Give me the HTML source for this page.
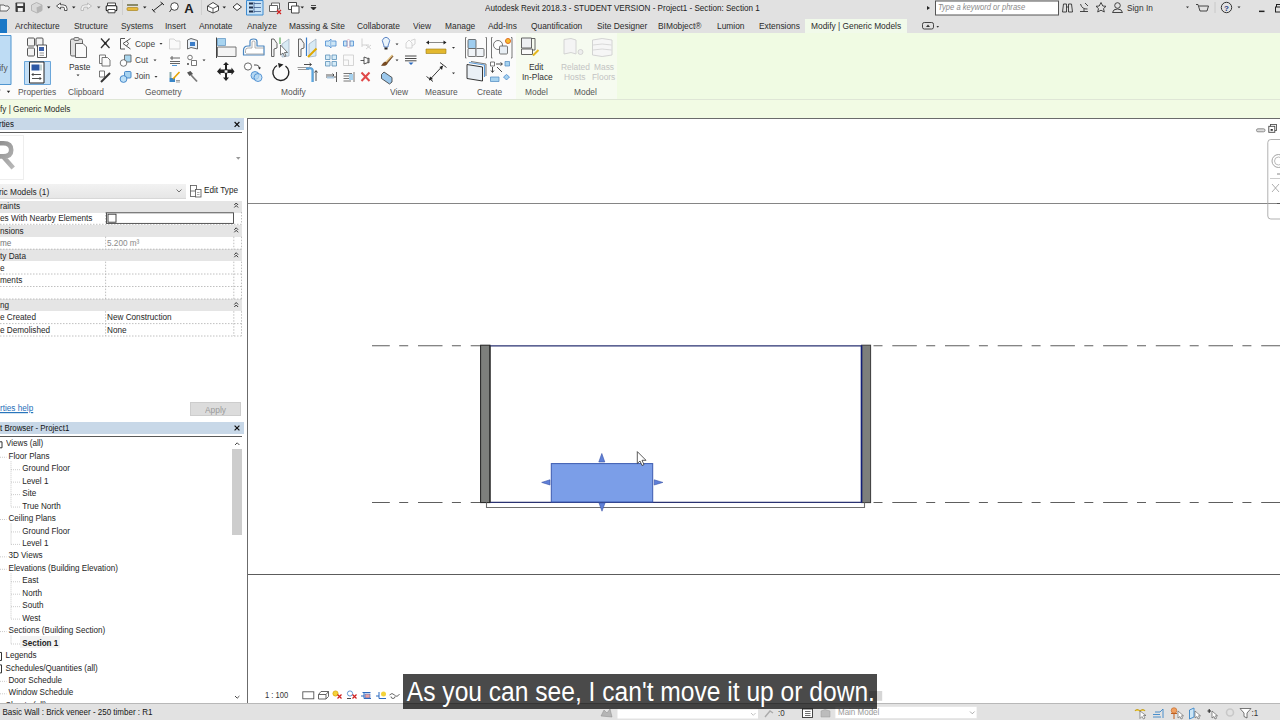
<!DOCTYPE html>
<html><head><meta charset="utf-8">
<style>
*{margin:0;padding:0;box-sizing:border-box}
html,body{width:1280px;height:720px;overflow:hidden;background:#fff;font-family:"Liberation Sans",sans-serif;color:#1e1e1e}
.a{position:absolute}
.t{position:absolute;white-space:nowrap;font-size:8px;line-height:10px;transform:scaleY(1.15);transform-origin:0 7.7px}
svg{position:absolute;overflow:visible}
#title{left:0;top:0;width:1280px;height:33px;background:#e1e1e1}
#ribbon{left:0;top:33px;width:1280px;height:66px;background:#fbfbfb}
#opts{left:0;top:99px;width:1280px;height:19px;background:#f2fbe4;border-top:1px solid #dfe6d6}
#props{left:0;top:118px;width:247px;height:586px;background:#fff}
#status{left:0;top:704px;width:1280px;height:16px;background:#e2e2e2}
#view{left:247px;top:118px;width:1033px;height:586px;background:#fff;border-left:1px solid #6b6b6b;border-top:1px solid #6b6b6b}
.hdr{position:absolute;left:0;width:244px;height:12px;background:#c8d8e8}
.grp{position:absolute;left:0;width:242px;height:12px;background:#e5e5e5}
.tab{position:absolute;top:22px;font-size:8.4px;line-height:8px;white-space:nowrap;color:#2b2b2b;transform:scaleY(1.15);transform-origin:0 6.8px}
.pl{position:absolute;top:88px;font-size:8.4px;line-height:8px;white-space:nowrap;color:#555;transform:scaleY(1.15);transform-origin:0 6.8px}
.pr{font-size:8.2px;color:#1e1e1e}
.tr{position:absolute;margin-top:-0.6px;font-size:8.1px;line-height:10px;white-space:nowrap;color:#1e1e1e;transform:scaleY(1.15);transform-origin:0 7.7px}
#cap{left:402.5px;top:673.8px;width:474.7px;height:35.2px;background:rgba(0,0,0,0.71)}
#cap span{position:absolute;left:4.3px;top:4px;font-size:24.6px;line-height:30px;color:#fff;white-space:nowrap;transform:scaleY(1.09);transform-origin:0 23px}
</style></head><body>
<!-- title + tabs -->
<div id="title" class="a"></div>
<div class="t" style="left:485px;top:3.8px;font-size:8.1px;color:#222">Autodesk Revit 2018.3 - STUDENT VERSION - Project1 - Section: Section 1</div>
<div class="a" style="left:0;top:19px;width:7px;height:14px;background:#1b78c6"></div>
<div class="a" style="left:805px;top:19px;width:102px;height:14px;background:#f1faea"></div>
<div class="tab" style="left:15px">Architecture</div>
<div class="tab" style="left:74px">Structure</div>
<div class="tab" style="left:121px">Systems</div>
<div class="tab" style="left:165px">Insert</div>
<div class="tab" style="left:199px">Annotate</div>
<div class="tab" style="left:247px">Analyze</div>
<div class="tab" style="left:289px">Massing &amp; Site</div>
<div class="tab" style="left:357px">Collaborate</div>
<div class="tab" style="left:413px">View</div>
<div class="tab" style="left:445px">Manage</div>
<div class="tab" style="left:488px">Add-Ins</div>
<div class="tab" style="left:531px">Quantification</div>
<div class="tab" style="left:597px">Site Designer</div>
<div class="tab" style="left:658px">BIMobject®</div>
<div class="tab" style="left:717px">Lumion</div>
<div class="tab" style="left:759px">Extensions</div>
<div class="tab" style="left:811px">Modify | Generic Models</div>

<!-- ribbon -->
<div id="ribbon" class="a"></div>
<div class="a" style="left:516px;top:33px;width:101px;height:66px;background:#f6fbf0"></div>
<div class="a" style="left:617px;top:33px;width:663px;height:66px;background:#f0fbe3"></div>
<svg width="1280" height="100" style="left:0;top:0" viewBox="0 0 1280 100">
 <!-- QAT -->
 <g stroke-linejoin="round">
  <path d="M0 5 H4 L5 6 H8 L9.5 8 L7 11 H0 Z" fill="#f4f4f4" stroke="#555" stroke-width="0.9"/>
  <rect x="15.5" y="2.5" width="9.5" height="9.5" rx="0.8" fill="#3a3a3a"/>
  <rect x="17.2" y="3.4" width="6" height="2.6" fill="#f2f2f2"/>
  <rect x="17.8" y="8" width="5" height="3.6" fill="#f2f2f2"/>
  <path d="M31.5 5 L36.5 2.5 L42 5 V10.5 L37 13 L31.5 10.5 Z" fill="#d8d8d8" stroke="#aaa" stroke-width="0.8"/>
  <path d="M36.5 7.5 L42 5 V10.5 L37 13 Z" fill="#b5b5b5"/>
  <path d="M47 6.5 H50.5 L48.75 8.5 Z" fill="#222"/>
  <path d="M56.5 6 L60.5 3 V4.8 H63 Q67 4.8 67 8.5 V10.5 H64.5 V8.5 Q64.5 7.2 63 7.2 H60.5 V9 Z" fill="#fff" stroke="#444" stroke-width="0.9"/>
  <path d="M72 6.5 H75.5 L73.75 8.5 Z" fill="#222"/>
  <path d="M91.5 6 L87.5 3 V4.8 H85 Q81 4.8 81 8.5 V10.5 H83.5 V8.5 Q83.5 7.2 85 7.2 H87.5 V9 Z" fill="#f0f0f0" stroke="#b8b8b8" stroke-width="0.9"/>
  <path d="M97 6.5 H100.5 L98.75 8.5 Z" fill="#555"/>
  <rect x="107.5" y="3" width="8" height="3" fill="#fff" stroke="#333" stroke-width="0.9"/>
  <rect x="106.2" y="5.8" width="10.6" height="5" rx="1" fill="#fff" stroke="#222" stroke-width="1.1"/>
  <rect x="108" y="9.5" width="7" height="3.3" fill="#fff" stroke="#333" stroke-width="0.9"/>
  <line x1="122.5" y1="0" x2="122.5" y2="15" stroke="#cfcfcf" stroke-width="1"/>
  <rect x="127" y="4" width="11" height="2" fill="#8a8a6a"/>
  <rect x="127" y="7.5" width="11" height="3" rx="1" fill="#e8b93a" stroke="#a07a10" stroke-width="0.6"/>
  <path d="M143 6.5 H146.5 L144.75 8.5 Z" fill="#222"/>
  <path d="M153 11 L163 3 M152 9 L155 12.5 M160.5 2 L164 5" stroke="#222" stroke-width="1"/>
  <circle cx="174.5" cy="6.5" r="3.8" fill="#fff" stroke="#333" stroke-width="0.9"/>
  <path d="M171.5 9 L169.5 12" stroke="#333" stroke-width="0.9"/>
  <text x="189" y="13" font-size="13" font-weight="bold" fill="#222" font-family="Liberation Sans" text-anchor="middle">A</text>
  <line x1="201.5" y1="0" x2="201.5" y2="15" stroke="#cfcfcf" stroke-width="1"/>
  <path d="M207.5 6 L213 2.5 L218.5 6 V10.5 L213 13 L207.5 10.5 Z" fill="#fff" stroke="#333" stroke-width="0.9"/>
  <path d="M207.5 6 L213 8.5 L218.5 6 M213 8.5 V13" fill="none" stroke="#333" stroke-width="0.8"/>
  <path d="M222.5 6.5 H226 L224.25 8.5 Z" fill="#222"/>
  <path d="M233 7 L237 3.5 L241.5 7 L237 10.5 Z" fill="#fff" stroke="#333" stroke-width="1"/>
  <rect x="246.5" y="0.5" width="16.5" height="14.5" fill="#c6e1f6" stroke="#3d8bd0" stroke-width="1"/>
  <g fill="#1e2e4a"><rect x="249" y="2.5" width="4" height="2"/><rect x="249" y="6.5" width="4" height="2"/><rect x="249" y="10.5" width="4" height="2"/></g>
  <g stroke="#2a4a80" stroke-width="0.7"><path d="M254 3.5 H261 M254 7.5 H261 M254 11.5 H261 M254 2 V13"/></g>
  <rect x="271.5" y="3" width="8" height="6" fill="#fff" stroke="#555" stroke-width="0.9"/>
  <rect x="269.5" y="5.5" width="8" height="6" fill="#fff" stroke="#555" stroke-width="0.9"/>
  <path d="M277 10 L281 14 M281 10 L277 14" stroke="#d02020" stroke-width="1.2"/>
  <rect x="288.5" y="2.5" width="8" height="7" fill="#fff" stroke="#333" stroke-width="0.9"/>
  <rect x="291.5" y="6" width="7.5" height="7" fill="#fff" stroke="#333" stroke-width="0.9"/>
  <path d="M300.5 6.5 H304 L302.25 8.5 Z" fill="#222"/>
  <path d="M311 5.5 H316 M311 7.5 H316 L313.5 10 Z" fill="#222" stroke="#222" stroke-width="0.8"/>
 </g>
 <!-- title right side -->
 <path d="M927 6 L930 8 L927 10 Z" fill="#222"/>
 <rect x="935.5" y="1" width="123" height="14" fill="#fff" stroke="#555" stroke-width="1"/>
 <text x="938" y="10.5" font-size="7.6" font-style="italic" fill="#8a8a8a" font-family="Liberation Sans" transform="matrix(1 0 0 1.15 0 -1.575)">Type a keyword or phrase</text>
 <g fill="none" stroke="#333" stroke-width="0.9">
  <path d="M1063.5 4 H1066.5 V12 H1062.5 Z M1068.5 4 H1071.5 L1072.5 12 H1068.5 Z M1066.5 7 H1068.5"/>
  <path d="M1080 11.5 H1088 M1084 11.5 V9 M1080.5 4 Q1082 9.5 1087.5 9 M1085 3 L1088 6"/>
  <path d="M1101 2.5 L1102.8 6 L1106 6.3 L1103.5 8.6 L1104.3 12 L1101 10.2 L1097.7 12 L1098.5 8.6 L1096 6.3 L1099.2 6 Z"/>
  <circle cx="1117.5" cy="5.5" r="2.8"/>
  <path d="M1112.5 12.5 Q1113 9 1117.5 9 Q1122 9 1122.5 12.5 Z"/>
  <path d="M1196 4.5 H1198 L1200 11 H1207 L1208.5 6 H1199"/>
  <circle cx="1226.5" cy="7.5" r="5.2" stroke-width="1"/>
 </g>
 <text x="1127" y="11" font-size="8.3" fill="#333" font-family="Liberation Sans" transform="matrix(1 0 0 1.15 0 -1.650)">Sign In</text>
 <path d="M1186 6.5 H1189 L1187.5 8.3 Z" fill="#333"/>
 <line x1="1215" y1="2" x2="1215" y2="13" stroke="#c8c8c8" stroke-width="1"/>
 <text x="1226.5" y="10.5" font-size="8" font-weight="bold" fill="#1b3a80" font-family="Liberation Sans" text-anchor="middle">?</text>
 <path d="M1237.5 6.5 H1240.5 L1239 8.3 Z" fill="#333"/>
 <rect x="1259" y="10.6" width="5.5" height="1.5" fill="#222"/>
 <rect x="1276.5" y="4.5" width="6" height="5" fill="none" stroke="#222" stroke-width="1"/>
 <rect x="1275.5" y="7" width="6" height="5" fill="#e1e1e1" stroke="#222" stroke-width="1"/>
 <!-- tabs right icon -->
 <rect x="922.5" y="22.5" width="11" height="6.5" rx="1.8" fill="none" stroke="#333" stroke-width="0.9"/>
 <path d="M926 27 L928 24.5 L930 27 Z" fill="#333"/>
 <path d="M936.5 26 H939 L937.75 27.7 Z" fill="#333"/>
</svg>
<svg width="1280" height="100" style="left:0;top:0" viewBox="0 0 1280 100">
 <g stroke-linejoin="round">
 <!-- Modify button -->
 <rect x="-2" y="35.5" width="13" height="49" fill="#bedcf4" stroke="#4f95d0" stroke-width="1"/>
 <text x="-0.8" y="70.6" font-size="8.4" fill="#555" font-family="Liberation Sans" transform="matrix(1 0 0 1.15 0 -10.590)">ify</text>
 <path d="M6.8 90.7 H10.2 L8.5 93 Z" fill="#222"/>
 <path d="M-1 88 V93 M0.5 90 H-2" stroke="#666" stroke-width="0.9"/>
 <!-- Properties -->
 <g fill="#f3f3f3" stroke="#444" stroke-width="0.9">
  <rect x="27.5" y="38" width="7" height="8" rx="1"/><rect x="36" y="38" width="7" height="8" rx="1"/>
  <rect x="27.5" y="48" width="7" height="8" rx="1"/>
  <rect x="37.5" y="45" width="9" height="12.5" fill="#fff"/>
 </g>
 <rect x="39" y="47" width="5" height="4" fill="#3b5fa8"/>
 <path d="M39.5 53 H44 M39.5 55.3 H44" stroke="#666" stroke-width="0.7"/>
 <rect x="24.5" y="61.5" width="26" height="23" fill="#c4dff6" stroke="#6aa6da" stroke-width="1"/>
 <rect x="29.5" y="62" width="14.5" height="21" fill="#fff" stroke="#222" stroke-width="1"/>
 <rect x="31.5" y="64.5" width="8" height="6" fill="#2d58a4"/>
 <path d="M41 64.5 V70.5" stroke="#8aa" stroke-width="1"/>
 <path d="M32 74.5 H41 M33.5 73 L32 74.5 L33.5 76 M32 78.5 H41 M39.5 77 L41 78.5 L39.5 80" fill="none" stroke="#222" stroke-width="0.8"/>
 <!-- Clipboard -->
 <rect x="70.5" y="39" width="12" height="17" rx="1.5" fill="#e0e0e0" stroke="#555" stroke-width="0.9"/>
 <rect x="74" y="37.5" width="5" height="3" rx="1" fill="#ddd" stroke="#555" stroke-width="0.8"/>
 <path d="M75.5 43.5 H83 L86.5 47 V57.5 H75.5 Z" fill="#fafafa" stroke="#555" stroke-width="0.9"/>
 <text x="69" y="70.5" font-size="8.4" fill="#333" font-family="Liberation Sans" transform="matrix(1 0 0 1.15 0 -10.575)">Paste</text>
 <path d="M76.5 74.5 H79.5 L78 76.3 Z" fill="#333"/>
 <path d="M101 38.5 L109.5 48 M109.5 38.5 L101 48" stroke="#333" stroke-width="1.3"/>
 <circle cx="105.3" cy="43.3" r="1.2" fill="#222"/>
 <rect x="99.5" y="55" width="6" height="8.5" fill="#fff" stroke="#555" stroke-width="0.8"/>
 <path d="M102 57.5 H107.5 L110 60 V66 H102 Z" fill="#fafafa" stroke="#555" stroke-width="0.8"/>
 <rect x="99.5" y="71" width="5" height="6" fill="#fff" stroke="#555" stroke-width="0.8"/>
 <path d="M101 82 L110 73" stroke="#333" stroke-width="2"/>
 <!-- Geometry -->
 <path d="M120.5 38.5 V49 M120.5 38.5 H125 M120.5 49 H125 M123 43.5 L130.5 38.5 M123 43.5 L130.5 49 M126.5 41 L128.5 43.5 L126.5 46" fill="none" stroke="#555" stroke-width="1"/>
 <text x="135" y="46.8" font-size="8.4" fill="#444" font-family="Liberation Sans" transform="matrix(1 0 0 1.15 0 -7.020)">Cope</text>
 <path d="M159.5 43 H162.5 L161 44.8 Z" fill="#333"/>
 <rect x="124.5" y="55" width="6.5" height="7" fill="#a9d6ee" stroke="#555" stroke-width="0.8"/>
 <circle cx="123.5" cy="63" r="3.3" fill="#fff" stroke="#555" stroke-width="0.8"/>
 <text x="135" y="63" font-size="8.4" fill="#444" font-family="Liberation Sans" transform="matrix(1 0 0 1.15 0 -9.450)">Cut</text>
 <path d="M153.5 59.5 H156.5 L155 61.3 Z" fill="#333"/>
 <rect x="124.5" y="71.5" width="6.5" height="6.5" rx="1" fill="#a7d3f0" stroke="#3b7fc4" stroke-width="0.9"/>
 <circle cx="123.5" cy="79" r="3.4" fill="#bde0f7" stroke="#3b7fc4" stroke-width="0.9"/>
 <text x="134.5" y="79.3" font-size="8.4" fill="#444" font-family="Liberation Sans" transform="matrix(1 0 0 1.15 0 -11.895)">Join</text>
 <path d="M154.5 76 H157.5 L156 77.8 Z" fill="#333"/>
 <path d="M169.5 39 H174 L176 41 H180 V49 H169.5 Z" fill="#fafafa" stroke="#d0d0d0" stroke-width="0.9"/>
 <path d="M187.5 40 L191 38.5 L197.5 40.5 V49 L191 47.5 L187.5 49 Z" fill="#e8f0f8" stroke="#555" stroke-width="0.9"/>
 <rect x="190" y="42" width="5" height="4" fill="#3a7cc8"/>
 <path d="M170 58 H180 M172 56 V60 M170 61.5 H180 M170 63.5 H180" stroke="#555" stroke-width="0.9"/>
 <path d="M172 65.5 H177" stroke="#3b8ad0" stroke-width="0.9"/>
 <circle cx="190" cy="57.5" r="2.3" fill="#fff" stroke="#555" stroke-width="0.8"/>
 <rect x="191.5" y="60.5" width="5" height="5" fill="#fff" stroke="#555" stroke-width="0.8"/>
 <circle cx="188" cy="64" r="0.9" fill="#333"/>
 <path d="M202.5 59.5 H205.5 L204 61.3 Z" fill="#333"/>
 <rect x="169.5" y="72" width="2" height="6" fill="#8aa"/>
 <path d="M169.5 82 V78 H175 V82 Z" fill="#3a86c8"/>
 <path d="M173 79 L179.5 72" stroke="#e6a300" stroke-width="1.6"/>
 <path d="M176 80.5 H180 M176 82 H180" stroke="#777" stroke-width="0.7"/>
 <path d="M187 72.5 L190.5 71 L193 74 L189.5 76 Z" fill="#555"/>
 <path d="M191 75 L197 81.5" stroke="#7a7a7a" stroke-width="1.8"/>
 <!-- Modify panel -->
 <path d="M216.5 37.5 V58" stroke="#444" stroke-width="1"/>
 <rect x="217.5" y="38.5" width="8" height="7" fill="#a8d4f0" stroke="#5a90c0" stroke-width="0.7"/>
 <rect x="217.5" y="47" width="18.5" height="9.5" fill="#f4f4f4" stroke="#666" stroke-width="0.9"/>
 <path d="M243.5 55 V50.5 Q243.5 46 248 46 H250 V41.5 Q250 39 253.5 39 Q257 39 257 41.5 V46 H264 V55 Z" fill="#fff" stroke="#4a86c0" stroke-width="1.2"/>
 <path d="M245.5 53 V50.5 Q245.5 48 248 48 H252 V42 Q252 41 253.5 41 Q255 41 255 42 V48 H264 M246 54 H264" fill="none" stroke="#999" stroke-width="0.8"/>
 <path d="M271.5 39 H274 L277 43.5 V48 L274 49 V56.5 H271.5 Z" fill="#f3f3f3" stroke="#555" stroke-width="0.9"/>
 <path d="M280 37.5 V44" stroke="#3a9a3a" stroke-width="1"/>
 <path d="M282 44 L289 39 V56 L282 57 Z" fill="#d8eaf4" stroke="#9ab" stroke-width="0.7"/>
 <path d="M280.5 45 V55 L283 53 L284.5 56.5 L286 56 L284.5 52.5 L287.5 52.5 Z" fill="#fff" stroke="#444" stroke-width="0.7"/>
 <path d="M298.5 39 H301 L304 43.5 V48 L301 49 V56.5 H298.5 Z" fill="#f3f3f3" stroke="#555" stroke-width="0.9"/>
 <path d="M306.5 37.5 V56" stroke="#3a7cc8" stroke-width="1.2"/>
 <path d="M309 44 L316 39 V56 L309 57 Z" fill="#d8eaf4" stroke="#9ab" stroke-width="0.7"/>
 <path d="M308 57 L316.5 48.5" stroke="#e0a800" stroke-width="2"/>
 <path d="M226 62 L229 65 H227 V69.5 H231.5 V67.5 L234.5 71.5 L231.5 75 V73 H227 V77.5 H229 L226 81 L223 77.5 H225 V73 H220.5 V75 L217 71.5 L220.5 67.5 V69.5 H225 V65 H223 Z" fill="#222"/>
 <rect x="224.3" y="70" width="3.5" height="3" fill="#fff" stroke="#222" stroke-width="0.6"/>
 <circle cx="248" cy="66.5" r="3.6" fill="#fff" stroke="#444" stroke-width="0.8"/>
 <path d="M254 65 Q259 64.5 259.5 68" fill="none" stroke="#333" stroke-width="0.9"/>
 <path d="M258 67.5 H261 L259.5 69.5 Z" fill="#222"/>
 <circle cx="255" cy="75.5" r="4" fill="#b6d8f2" stroke="#4a8cd0" stroke-width="0.9"/>
 <circle cx="258" cy="77.5" r="4" fill="#b6d8f2" fill-opacity="0.7" stroke="#4a8cd0" stroke-width="0.9"/>
 <path d="M277 65.5 A8 8 0 1 0 285.5 66" fill="none" stroke="#222" stroke-width="1.4"/>
 <path d="M278 63 L283.5 64.5 L279 68 Z" fill="#222"/>
 <path d="M297.5 67.5 H309 Q313 67.5 313 71 V82 M298 69.5 H309" fill="none" stroke="#999" stroke-width="1.2"/>
 <path d="M306 68.5 H311 Q312.5 68.5 312.5 70.5 V82" fill="none" stroke="#5aa6e0" stroke-width="2.2"/>
 <path d="M304 64.5 H311 M309.5 63 L311.5 64.5 L309.5 66 M316 81 V71 M314.5 72.5 L316 70.5 L317.5 72.5" fill="none" stroke="#222" stroke-width="0.8"/>
 <!-- View-ish small tools -->
 <path d="M325.5 41 H329 L331 39 V48 L329 46 H325.5 Z" fill="#cde6f6" stroke="#4a8cd0" stroke-width="0.8"/>
 <path d="M331.5 41 H336 V46 H331.5" fill="#cde6f6" stroke="#4a8cd0" stroke-width="0.8"/>
 <rect x="343.5" y="41" width="3.5" height="5" fill="#cde6f6" stroke="#4a8cd0" stroke-width="0.8"/>
 <rect x="350" y="41" width="3.5" height="5" fill="#cde6f6" stroke="#4a8cd0" stroke-width="0.8"/>
 <ellipse cx="348.5" cy="43.5" rx="1.5" ry="4.5" fill="none" stroke="#c9a" stroke-width="0.6"/>
 <path d="M362 38.5 V47 M362 45 H369 M366 45 L371 49 M371 45 L366 49" fill="none" stroke="#c8c8c8" stroke-width="0.8"/>
 <path d="M383 43 A3.6 3.6 0 1 1 389 43 Q388 45 388 47 H384 Q384 45 383 43 Z" fill="#eaf4fb" stroke="#3a6ab8" stroke-width="0.8"/>
 <rect x="384.5" y="47.5" width="3" height="2" fill="#222"/>
 <path d="M395.5 43.5 H398.5 L397 45.3 Z" fill="#333"/>
 <path d="M406 43 L409 40 L412 43 V48 H406 Z M411 40.5 L415 39 V44 L412 46" fill="none" stroke="#ccc" stroke-width="0.8"/>
 <g fill="#d6ecf8" stroke="#5a90b8" stroke-width="0.8"><rect x="325.5" y="55" width="4.5" height="4.5"/><rect x="332" y="55" width="4.5" height="4.5"/><rect x="325.5" y="61.5" width="4.5" height="4.5"/><rect x="332" y="61.5" width="4.5" height="4.5"/></g>
 <rect x="343.5" y="55" width="10" height="10.5" fill="#fafafa" stroke="#ccc" stroke-width="0.8"/>
 <path d="M343.5 60 H348.5 V65.5" fill="none" stroke="#ccc" stroke-width="0.8"/>
 <path d="M360.5 60.5 H364 M364 57 V64 L368 62.5 V58.5 Z M368 58.5 L369 58 V63 L368 62.5" fill="none" stroke="#333" stroke-width="0.8"/>
 <path d="M381.5 65.5 Q384 61 386.5 62 L392 55.5 L393 56.5 L387.5 63 Q387 66 381.5 65.5 Z" fill="#7a4a20" stroke="#5a3410" stroke-width="0.5"/>
 <path d="M386 62 L392.5 55" stroke="#e0c080" stroke-width="1.2"/>
 <path d="M395.5 59.5 H398.5 L397 61.3 Z" fill="#333"/>
 <path d="M405 56 H416.5 M405 58.5 H416.5 M405 60.8 H416.5" stroke="#333" stroke-width="0.9"/>
 <path d="M408.5 62.5 L411 65 L413.5 62.5 Z" fill="#2a6ac0"/>
 <path d="M326 77 H336 M326 75 H334 M332.5 73.5 L334 75 L332.5 76.5 M336.5 72 V82" fill="none" stroke="#333" stroke-width="0.8"/>
 <rect x="327" y="76.5" width="7" height="2" fill="#aac8e0"/>
 <path d="M343.5 73.5 H352 M343.5 76 H351 M343.5 78.5 H351 M343.5 81 H351 M354 72 V82" fill="none" stroke="#555" stroke-width="0.8"/>
 <rect x="349" y="74" width="4" height="6" fill="#a6d2ef"/>
 <path d="M361.5 72.5 L369.5 81 M369.5 72.5 L361.5 81" stroke="#e04848" stroke-width="2"/>
 <path d="M381.5 74.5 L384 72 L392 77.5 V82 L389.5 84 L381.5 78.5 Z" fill="#9cc8ec" stroke="#333" stroke-width="0.8"/>
 <!-- Measure -->
 <path d="M427 42.5 H446" stroke="#888" stroke-width="1"/>
 <path d="M426 42.5 L429 40.5 V44.5 Z M446.5 42.5 L443.5 40.5 V44.5 Z" fill="#222"/>
 <rect x="426" y="49" width="20" height="4.5" fill="#e3b82e" stroke="#9a7a10" stroke-width="0.6"/>
 <path d="M452 47 H455 L453.5 48.8 Z" fill="#333"/>
 <path d="M429.5 80 L442.5 66 M426.5 76.5 L433 81.5 M440 62.5 L446.5 67.5" fill="none" stroke="#222" stroke-width="0.9"/>
 <path d="M429 80.5 L430 76.5 L433 79 Z M443 65.5 L439.5 67 L442 70 Z" fill="#222"/>
 <path d="M452 72.5 H455 L453.5 74.3 Z" fill="#333"/>
 <!-- Create -->
 <path d="M466.5 37.5 H465.5 V58 H466.5 M485.5 37.5 H486.5 V58 H485.5" fill="none" stroke="#666" stroke-width="0.9"/>
 <rect x="468" y="39.5" width="8" height="9" rx="1" fill="#9fcdef" stroke="#555" stroke-width="0.8"/>
 <rect x="468" y="48.5" width="8" height="8" rx="1" fill="#f0f4f8" stroke="#555" stroke-width="0.8"/>
 <rect x="476" y="48.5" width="8" height="8" rx="1" fill="#f0f4f8" stroke="#555" stroke-width="0.8"/>
 <path d="M492.5 37.5 H491.5 V58 H492.5 M511 37.5 H512 V58 H511" fill="none" stroke="#666" stroke-width="0.9"/>
 <circle cx="498" cy="45" r="4.5" fill="#fff" stroke="#555" stroke-width="0.8"/>
 <rect x="499.5" y="46" width="8" height="8" rx="1" fill="#e8eef4" stroke="#555" stroke-width="0.8"/>
 <circle cx="508" cy="41" r="2.5" fill="#f5c030" stroke="#e06a20" stroke-width="1"/>
 <path d="M467 64.5 L482.5 67 V81 L467 78.5 Z" fill="#eaf0f6" stroke="#222" stroke-width="0.9"/>
 <path d="M469 62.5 L484.5 65 V77" fill="none" stroke="#5a9ad8" stroke-width="1.2"/>
 <path d="M471 61.5 L486 64 V76" fill="none" stroke="#555" stroke-width="0.8"/>
 <rect x="490.5" y="62" width="4" height="4" fill="#fff" stroke="#555" stroke-width="0.8"/>
 <path d="M496 64 H502 M500.5 62.5 L502.5 64 L500.5 65.5 M492.5 67 V72 M491 70.5 L492.5 72.5 L494 70.5 M497 67 L502 72" fill="none" stroke="#222" stroke-width="0.8"/>
 <rect x="505" y="61.5" width="4.5" height="4.5" fill="#a6d2ef" stroke="#4a86c0" stroke-width="0.7"/>
 <rect x="490.5" y="77" width="8.5" height="4.5" fill="#a6d2ef" stroke="#4a86c0" stroke-width="0.7"/>
 <path d="M506.5 74.5 L509.5 77 L506.5 80 L503.5 77 Z" fill="#a6d2ef" stroke="#3a7cc8" stroke-width="0.7"/>
 <!-- Model -->
 <rect x="521.5" y="38" width="10" height="10" fill="#eef0f2" stroke="#555" stroke-width="0.9"/>
 <path d="M531.5 38.5 H535 V50 H528" fill="none" stroke="#555" stroke-width="0.9"/>
 <rect x="521.5" y="49" width="11" height="5.5" fill="#fafafa" stroke="#555" stroke-width="0.9"/>
 <path d="M538.5 50 L533 55.5" stroke="#e6b820" stroke-width="2"/>
 <text x="529" y="70.5" font-size="8.4" fill="#333" font-family="Liberation Sans" transform="matrix(1 0 0 1.15 0 -10.575)">Edit</text>
 <text x="522" y="80.5" font-size="8.4" fill="#333" font-family="Liberation Sans" transform="matrix(1 0 0 1.15 0 -12.075)">In-Place</text>
 <path d="M564 39.5 L571 38.5 L576 40 V54 L571 52.5 L564 54 Z" fill="#f4f4f4" stroke="#cfcfcf" stroke-width="0.9"/>
 <circle cx="580.5" cy="52" r="2.5" fill="#eee" stroke="#ccc" stroke-width="0.8"/>
 <text x="561" y="70.5" font-size="8.4" fill="#c3c3c3" font-family="Liberation Sans" transform="matrix(1 0 0 1.15 0 -10.575)">Related</text>
 <text x="564" y="80.5" font-size="8.4" fill="#c3c3c3" font-family="Liberation Sans" transform="matrix(1 0 0 1.15 0 -12.075)">Hosts</text>
 <path d="M592.5 40 Q602 37 612 40 V55 Q602 58 592.5 55 Z" fill="#f6f6f6" stroke="#cfcfcf" stroke-width="0.9"/>
 <path d="M593 45 Q602 43 611.5 45 M593 50 Q602 48 611.5 50" fill="none" stroke="#d0d0d0" stroke-width="0.8"/>
 <text x="594" y="70.5" font-size="8.4" fill="#c3c3c3" font-family="Liberation Sans" transform="matrix(1 0 0 1.15 0 -10.575)">Mass</text>
 <text x="592" y="80.5" font-size="8.4" fill="#c3c3c3" font-family="Liberation Sans" transform="matrix(1 0 0 1.15 0 -12.075)">Floors</text>
 </g>
 <line x1="0" y1="99.5" x2="1280" y2="99.5" stroke="#d9e3d0" stroke-width="1"/>
</svg>
<div class="pl" style="left:18px">Properties</div>
<div class="pl" style="left:68px">Clipboard</div>
<div class="pl" style="left:145px">Geometry</div>
<div class="pl" style="left:281px">Modify</div>
<div class="pl" style="left:390px">View</div>
<div class="pl" style="left:425px">Measure</div>
<div class="pl" style="left:477px">Create</div>
<div class="pl" style="left:525px">Model</div>
<div class="pl" style="left:574px">Model</div>

<div id="opts" class="a"></div>
<div class="t" style="left:0;top:105px;font-size:8.2px;color:#2a2a2a">fy | Generic Models</div>

<!-- properties -->
<div id="props" class="a"></div>
<div class="hdr" style="top:118px"></div>
<div class="t pr" style="left:-1px;top:120px;font-size:7.9px;color:#111">rties</div>
<div class="a" style="left:0;top:132px;width:242px;height:1px;background:#5a5a5a"></div>
<div class="a" style="left:0;top:135px;width:24px;height:45px;border:1px solid #eee;border-left:none"></div>
<div class="a" style="left:0;top:183.5px;width:186px;height:15px;background:linear-gradient(#f2f2f2,#e6e6e6);border-bottom:1px solid #d8d8d8"></div>
<div class="t pr" style="left:-5.7px;top:187px;font-size:8.3px">eric Models (1)</div>
<div class="t pr" style="left:204px;top:186px">Edit Type</div>

<div class="grp" style="top:201px"></div>
<div class="t pr" style="left:0;top:201.7px">raints</div>
<div class="t pr" style="left:0;top:214.2px">es With Nearby Elements</div>
<div class="grp" style="top:224.6px"></div>
<div class="t pr" style="left:0;top:226.7px">nsions</div>
<div class="t pr" style="left:0;top:239.2px;color:#777">me</div>
<div class="t pr" style="left:107px;top:239.2px;color:#8a8a8a">5.200 m³</div>
<div class="grp" style="top:249.2px"></div>
<div class="t pr" style="left:0;top:251.7px">ty Data</div>
<div class="t pr" style="left:0;top:263.7px">e</div>
<div class="t pr" style="left:0;top:276.2px">ments</div>
<div class="grp" style="top:299.1px"></div>
<div class="t pr" style="left:0;top:301.2px">ng</div>
<div class="t pr" style="left:0;top:313.2px">e Created</div>
<div class="t pr" style="left:107px;top:313.2px">New Construction</div>
<div class="t pr" style="left:0;top:325.7px">e Demolished</div>
<div class="t pr" style="left:107px;top:325.7px">None</div>

<svg width="250" height="720" style="left:0;top:0" viewBox="0 0 250 720">
 <!-- close X -->
 <path d="M234.6 122 L239.4 126.8 M239.4 122 L234.6 126.8" stroke="#111" stroke-width="1.2"/>
 <!-- R logo -->
 <defs><linearGradient id="rg" x1="0" y1="0" x2="1" y2="1"><stop offset="0" stop-color="#8a8a8a"/><stop offset="1" stop-color="#b8b8b8"/></linearGradient></defs>
 <path d="M-6 143.2 H3.5 Q11.2 143.2 11.2 150 Q11.2 156.4 3.5 156.4 H-3 M3.5 157 L13.2 168" fill="none" stroke="url(#rg)" stroke-width="4.6" stroke-linecap="butt"/>
 <path d="M236 157 H240.5 L238.25 159.8 Z" fill="#999"/>
 <path d="M176.5 189.5 L179 192 L181.5 189.5" fill="none" stroke="#555" stroke-width="0.8"/>
 <!-- edit type icon -->
 <rect x="190.5" y="185.5" width="6" height="11" fill="#fff" stroke="#555" stroke-width="0.8"/>
 <path d="M190.5 191 H196.5" stroke="#555" stroke-width="0.8"/>
 <rect x="195.5" y="189.5" width="5.5" height="7.5" fill="#fff" stroke="#555" stroke-width="0.8"/>
 <path d="M197 192.5 H199.5 M197 194.5 H199.5" stroke="#777" stroke-width="0.6"/>
 <!-- chevrons -->
 <g fill="none" stroke="#222" stroke-width="0.9">
  <path d="M234.3 205 L236.2 203 L238.1 205 M234.3 207.5 L236.2 205.5 L238.1 207.5"/>
  <path d="M234.3 229.8 L236.2 227.8 L238.1 229.8 M234.3 232.3 L236.2 230.3 L238.1 232.3"/>
  <path d="M234.3 254.7 L236.2 252.7 L238.1 254.7 M234.3 257.2 L236.2 255.2 L238.1 257.2"/>
  <path d="M234.3 304.5 L236.2 302.5 L238.1 304.5 M234.3 307 L236.2 305 L238.1 307"/>
 </g>
 <!-- grid -->
 <g stroke="#b0b0b0" stroke-width="0.8" stroke-dasharray="1.5 1.5" fill="none">
  <path d="M0 224.3 H242 M0 249.2 H242 M0 274 H242 M0 286.5 H242 M0 299 H242 M0 323.6 H242 M0 336 H242"/>
  <path d="M105.6 212 V224.3 M105.6 236.7 V249.2 M105.6 261.6 V299 M105.6 311.2 V336"/>
  <path d="M241.5 212 V224.3 M241.5 236.7 V249.2 M241.5 261.6 V299 M241.5 311.2 V336"/>
  <path d="M233.8 236.7 V249.2 M233.8 261.6 V299 M233.8 311.2 V336"/>
 </g>
 <rect x="106.5" y="212.8" width="127" height="10.6" fill="#fff" stroke="#444" stroke-width="0.9"/>
 <rect x="108" y="214.2" width="8" height="8" fill="#fff" stroke="#333" stroke-width="0.9"/>
 <!-- browser scrollbar -->
 <path d="M235 445 L237.2 442.8 L239.4 445" fill="none" stroke="#333" stroke-width="0.9"/>
 <path d="M235 696 L237.2 698.2 L239.4 696" fill="none" stroke="#333" stroke-width="0.9"/>
 <!-- tree lines -->
 <g stroke="#b4b4b4" stroke-width="0.7" stroke-dasharray="1 1" fill="none">
  <path d="M0 457.25 H6.5 M0 519.50 H6.5 M0 556.85 H6.5 M0 569.30 H6.5 M0 631.55 H6.5 M0 681.35 H6.5 M0 693.80 H6.5 M11 469.70 H20 M11 482.15 H20 M11 494.60 H20 M11 507.05 H20 M11 531.95 H20 M11 544.40 H20 M11 581.75 H20 M11 594.20 H20 M11 606.65 H20 M11 619.10 H20 M11 644.00 H20 M11 461.25 V507.05 M11 523.50 V544.40 M11 573.30 V619.10 M11 635.55 V644.00"/>
 </g>
 <path d="M0 441.80 H2 V447.80 H0" fill="none" stroke="#333" stroke-width="1"/>
 <path d="M0 652.45 H1.5 V660.45 H0 M0 664.90 H1.5 V672.90 H0" fill="none" stroke="#333" stroke-width="1"/>
</svg>
<div class="t pr" style="left:0;top:404.3px;color:#1f6fb9;text-decoration:underline">rties help</div>
<div class="a" style="left:190px;top:401.5px;width:51px;height:14px;background:#dcdcdc;border:1px solid #cdcdcd"></div>
<div class="t pr" style="left:205px;top:405px;color:#9a9a9a;font-size:8.4px">Apply</div>

<!-- project browser -->
<div class="hdr" style="top:421.5px"></div>
<div class="t pr" style="left:0;top:424px;font-size:7.9px;color:#111">t Browser - Project1</div>
<div class="a" style="left:0;top:435.5px;width:242px;height:1.2px;background:#5a5a5a"></div>
<div class="a" style="left:232px;top:449px;width:10px;height:86px;background:#cdcdcd"></div>
<div class="tr" style="left:6px;top:440.00px">Views (all)</div>
<div class="tr" style="left:8.5px;top:452.45px">Floor Plans</div>
<div class="tr" style="left:22.3px;top:464.90px">Ground Floor</div>
<div class="tr" style="left:22.3px;top:477.35px">Level 1</div>
<div class="tr" style="left:22.3px;top:489.80px">Site</div>
<div class="tr" style="left:22.3px;top:502.25px">True North</div>
<div class="tr" style="left:8.5px;top:514.70px">Ceiling Plans</div>
<div class="tr" style="left:22.3px;top:527.15px">Ground Floor</div>
<div class="tr" style="left:22.3px;top:539.60px">Level 1</div>
<div class="tr" style="left:8.5px;top:552.05px">3D Views</div>
<div class="tr" style="left:8.5px;top:564.50px">Elevations (Building Elevation)</div>
<div class="tr" style="left:22.3px;top:576.95px">East</div>
<div class="tr" style="left:22.3px;top:589.40px">North</div>
<div class="tr" style="left:22.3px;top:601.85px">South</div>
<div class="tr" style="left:22.3px;top:614.30px">West</div>
<div class="tr" style="left:8.5px;top:626.75px">Sections (Building Section)</div>
<div class="a" style="left:20px;top:635.70px;width:40px;height:12px;background:#f3f3f3"></div>
<div class="tr" style="left:22.3px;top:639.20px;font-weight:bold">Section 1</div>
<div class="tr" style="left:5.5px;top:651.65px">Legends</div>
<div class="tr" style="left:5.5px;top:664.10px">Schedules/Quantities (all)</div>
<div class="tr" style="left:8.5px;top:676.55px">Door Schedule</div>
<div class="tr" style="left:8.5px;top:689.00px">Window Schedule</div>
<div class="tr" style="left:5.5px;top:701.45px">Sheets (all)</div>

<!-- drawing -->
<div id="view" class="a"></div>
<svg width="1280" height="720" style="left:0;top:0" viewBox="0 0 1280 720">
 <line x1="248" y1="203.5" x2="1280" y2="203.5" stroke="#858585" stroke-width="1.1"/>
 <line x1="248" y1="574.5" x2="1280" y2="574.5" stroke="#5c5c5c" stroke-width="1.2"/>
 <g stroke="#5e5e5e" stroke-width="1.15" fill="none" stroke-dasharray="24.5 9.4 9 9.8">
  <line x1="372" y1="345.7" x2="480" y2="345.7" stroke-dashoffset="6.7"/>
  <line x1="871" y1="345.7" x2="1280" y2="345.7" stroke-dashoffset="31.4"/>
  <line x1="372" y1="502.5" x2="480" y2="502.5" stroke-dashoffset="6.7"/>
  <line x1="871" y1="502.5" x2="1280" y2="502.5" stroke-dashoffset="31.4"/>
 </g>
 <!-- walls -->
 <rect x="480.6" y="345.2" width="9.4" height="157.4" fill="#7d7f7c" stroke="#1f1f1f" stroke-width="1"/>
 <rect x="861.6" y="345.2" width="9" height="157.4" fill="#7d7f7c" stroke="#3a3a3a" stroke-width="1"/>
 <!-- blue outline -->
 <path d="M490 345.8 H861.5 V502.3 H490" fill="none" stroke="#2a3272" stroke-width="1.3"/>
 <line x1="861.5" y1="345.5" x2="861.5" y2="502.5" stroke="#121f78" stroke-width="1.4"/>
 <line x1="490" y1="345.5" x2="490" y2="502.5" stroke="#222" stroke-width="1"/>
 <!-- bracket -->
 <path d="M486.5 502.5 V507.5 H864.5 V502.5" fill="none" stroke="#6e6e6e" stroke-width="1.1"/>
 <!-- generic model box -->
 <rect x="551.3" y="463.6" width="101.4" height="38.4" fill="#7b9ee8" stroke="#3c5bb0" stroke-width="1"/>
 <g fill="#5f80d8" stroke="#3a54a8" stroke-width="0.6">
  <path d="M601.8 453.5 L604.8 462 H598.8 Z"/>
  <path d="M599 503 H605 L602 511.2 Z"/>
  <path d="M541.7 482.4 L550 479.8 V485 Z"/>
  <path d="M654.2 479.8 L662.9 482.4 L654.2 485 Z"/>
 </g>
 <!-- cursor -->
 <path d="M637.3 451.6 V463.5 L640 461 L642 465.5 L644 464.6 L642 460.3 L646 460.3 Z" fill="#fff" stroke="#333" stroke-width="0.8"/>
 <!-- view window controls -->
 <rect x="1256.5" y="128.8" width="8.5" height="3" rx="1.4" fill="#ddd" stroke="#777" stroke-width="0.8"/>
 <rect x="1270.5" y="124.5" width="6" height="6" fill="#fff" stroke="#555" stroke-width="0.9"/>
 <rect x="1268.8" y="126.3" width="6" height="6" fill="#fff" stroke="#444" stroke-width="0.9"/>
 <rect x="1270.6" y="129" width="2.2" height="1.8" fill="#333"/>
 <!-- nav bar -->
 <rect x="1267.8" y="139.5" width="20" height="79.5" rx="3" fill="none" stroke="#a8a8a8" stroke-width="0.9"/>
 <circle cx="1278.5" cy="161" r="6.5" fill="none" stroke="#9a9a9a" stroke-width="0.9"/>
 <circle cx="1278.5" cy="161" r="4" fill="none" stroke="#aaa" stroke-width="0.8"/>
 <line x1="1270" y1="178.5" x2="1280" y2="178.5" stroke="#ccc" stroke-width="1"/>
 <path d="M1272 184 L1279 192 M1279 184 L1272 192" stroke="#999" stroke-width="0.8"/>
 <line x1="1277" y1="174" x2="1280" y2="174" stroke="#888" stroke-width="1"/>
 <line x1="1277" y1="203.5" x2="1280" y2="203.5" stroke="#555" stroke-width="1"/>
 <!-- view control bar -->
 <text x="265" y="698.5" font-size="7.6" fill="#333" font-family="Liberation Sans" transform="matrix(1 0 0 1.15 0 -104.775)">1 : 100</text>
</svg>

<!-- status -->
<div id="status" class="a"></div>
<div class="t" style="left:2.5px;top:707.5px;font-size:8px;color:#151515">Basic Wall : Brick veneer - 250 timber : R1</div>

<svg width="1280" height="720" style="left:0;top:0" viewBox="0 0 1280 720">
 <line x1="0" y1="703.5" x2="1280" y2="703.5" stroke="#b8b8b8" stroke-width="1"/>
 <path d="M234.6 425.6 L239.4 430.4 M239.4 425.6 L234.6 430.4" stroke="#111" stroke-width="1.2"/>
 <!-- view control bar icons -->
 <g fill="#fff" stroke="#555" stroke-width="0.9">
  <rect x="302.8" y="691.8" width="11" height="7"/>
  <path d="M318.5 694.5 H326 V699 H318.5 Z M318.5 694.5 L321 691.5 H328.5 L326 694.5 M328.5 691.5 V696.5 L326 699"/>
 </g>
 <circle cx="335.5" cy="693.5" r="2.6" fill="#f3d23a" stroke="#d8a000" stroke-width="0.7"/>
 <path d="M337.5 694.5 L341.5 698.5 M341.5 694.5 L337.5 698.5" stroke="#d02020" stroke-width="1.2"/>
 <circle cx="350" cy="693.5" r="2.6" fill="#fff" stroke="#3a7cc8" stroke-width="0.8"/>
 <path d="M347 698.5 H351" stroke="#333" stroke-width="0.9"/>
 <path d="M352.5 694.5 L356.5 698.5 M356.5 694.5 L352.5 698.5" stroke="#d02020" stroke-width="1.2"/>
 <path d="M361 696 H364 M364 692 V698.5 H371 M362.5 692.5 H370.5" fill="none" stroke="#2a6ac0" stroke-width="1"/>
 <rect x="365" y="694" width="5" height="4" fill="#e8a0a0" stroke="#3a6ac0" stroke-width="0.6"/>
 <path d="M376 696 H379 M379 692 V698.5 H386" fill="none" stroke="#2a6ac0" stroke-width="1"/>
 <circle cx="383.5" cy="694" r="2.5" fill="#f3d23a"/>
 <path d="M389.5 695 Q392 692 394.5 695 Q397 698 399.5 694 M391 696.5 A2 2 0 1 0 395 696.5" fill="none" stroke="#444" stroke-width="0.8"/>
 <rect x="869" y="691" width="13.2" height="9.8" fill="#d6d6d6"/>
 <!-- status bar middle -->
 <path d="M601 716 L604 710 L607 713 L610 709 L612 717 Z" fill="#b5b5b5" stroke="#888" stroke-width="0.5"/>
 <rect x="617.5" y="709.5" width="140.5" height="9" fill="#fff"/>
 <path d="M751 713 L753.3 715.3 L755.6 713" fill="none" stroke="#aaa" stroke-width="0.7"/>
 <path d="M765 717 L770 711 L773 713" fill="none" stroke="#aaa" stroke-width="1.4"/>
 <text x="778" y="716.5" font-size="8" fill="#333" font-family="Liberation Sans" transform="matrix(1 0 0 1.15 0 -107.475)">:0</text>
 <rect x="802.5" y="709" width="10" height="8.5" fill="#fff" stroke="#333" stroke-width="0.9"/>
 <path d="M805 711.5 H810.5 M805 713.5 H810.5 M805 715.5 H810.5" stroke="#333" stroke-width="0.7"/>
 <path d="M821 717 V711 L825 709.5 L830 711 V717 Z" fill="#bcbcbc" stroke="#999" stroke-width="0.5"/>
 <rect x="835" y="706.5" width="142" height="12" fill="#fff" stroke="#e4e4e4" stroke-width="0.8"/>
 <text x="838" y="715.5" font-size="8" fill="#9a9a9a" font-family="Liberation Sans" transform="matrix(1 0 0 1.15 0 -107.325)">Main Model</text>
 <path d="M970 711.5 L972.3 713.8 L974.6 711.5" fill="none" stroke="#888" stroke-width="0.7"/>
 <!-- right status icons -->
 <path d="M1135 711 Q1137 708 1140 711 Q1143 708 1145 711" fill="#f0d040" stroke="#c8a020" stroke-width="1.2"/>
 <path d="M1140 711 V718.5 L1142 716.5 L1143.5 719 L1145 718 L1143.5 715.5 L1146 715.5 Z" fill="#fff" stroke="#555" stroke-width="0.6"/>
 <path d="M1153 717 H1161 M1153 714.5 H1160 M1155 712 H1160 L1163 709 V718" fill="none" stroke="#3a86c8" stroke-width="0.9"/>
 <circle cx="1174" cy="710.5" r="2.8" fill="#f0a060" stroke="#c06020" stroke-width="0.6"/>
 <path d="M1171 713.5 H1177 M1174 713.5 V719" stroke="#c06020" stroke-width="1"/>
 <path d="M1178 711 V718 L1180 716.5 L1181 719 L1182.5 718.3 L1181.5 715.8 L1183.5 715.8 Z" fill="#fff" stroke="#555" stroke-width="0.6"/>
 <path d="M1189.5 710 L1194 708 V717 L1189.5 719 Z" fill="#cde6f6" stroke="#3a86c8" stroke-width="0.9"/>
 <path d="M1195 711 V718 L1197 716.5 L1198 719 L1199.5 718.3 L1198.5 715.8 L1200.5 715.8 Z" fill="#fff" stroke="#555" stroke-width="0.6"/>
 <path d="M1207.5 711 H1211 M1209.2 709 V713" stroke="#222" stroke-width="1"/>
 <path d="M1212 711 V718 L1214 716.5 L1215 719 L1216.5 718.3 L1215.5 715.8 L1217.5 715.8 Z" fill="#fff" stroke="#444" stroke-width="0.6"/>
 <circle cx="1230" cy="712.5" r="3.5" fill="none" stroke="#c8c8c8" stroke-width="1.6"/>
 <path d="M1240 708.5 H1251 L1247 713 V718 L1244 716.5 V713 Z" fill="#fff" stroke="#555" stroke-width="0.8"/>
 <text x="1251.5" y="716.5" font-size="8" fill="#333" font-family="Liberation Sans" transform="matrix(1 0 0 1.15 0 -107.475)">:1</text>
</svg>
<div id="cap" class="a"><span>As you can see, I can't move it up or down.</span></div>
</body></html>
